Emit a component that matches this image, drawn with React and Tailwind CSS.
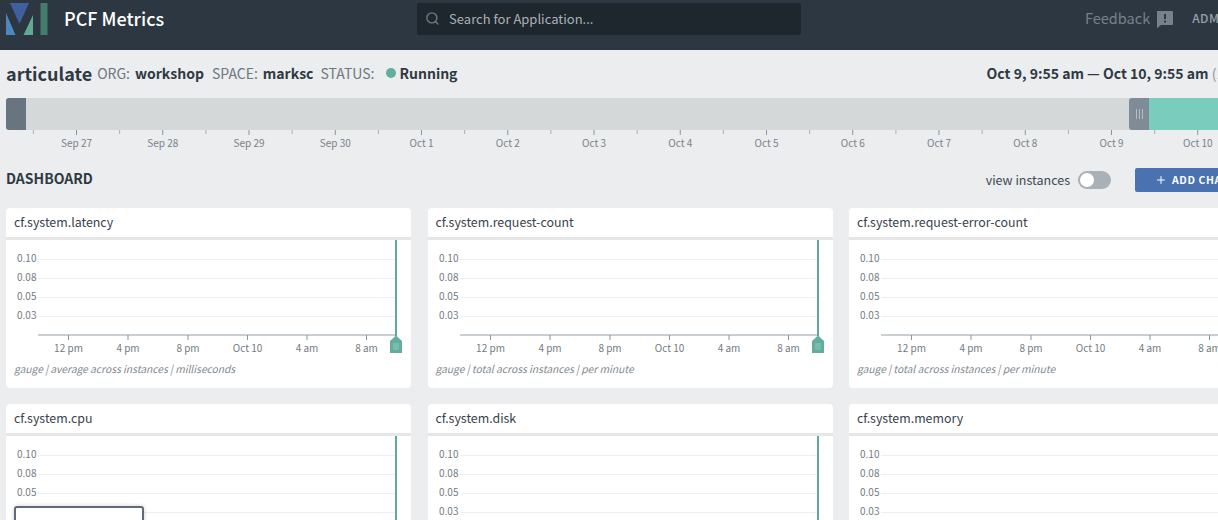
import React from 'react'
import { Search, Plus } from 'lucide-react'

const fontStack = "font-['Noto_Sans_CJK_SC','Noto_Sans',sans-serif]"

const timelineDays = ['Sep 27', 'Sep 28', 'Sep 29', 'Sep 30', 'Oct 1', 'Oct 2', 'Oct 3', 'Oct 4', 'Oct 5', 'Oct 6', 'Oct 7', 'Oct 8', 'Oct 9', 'Oct 10']

const charts = [
  { name: 'cf.system.latency', caption: 'gauge | average across instances | milliseconds', handle: true },
  { name: 'cf.system.request-count', caption: 'gauge | total across instances | per minute', handle: true },
  { name: 'cf.system.request-error-count', caption: 'gauge | total across instances | per minute', handle: false },
  { name: 'cf.system.cpu', caption: 'gauge | average across instances | percent', handle: true },
  { name: 'cf.system.disk', caption: 'gauge | average across instances | percent', handle: true },
  { name: 'cf.system.memory', caption: 'gauge | average across instances | percent', handle: false },
]

const yTicks = [['0.10', 19.5], ['0.08', 38.5], ['0.05', 57.5], ['0.03', 76.5]]
const xTicks = [['12 pm', 62.5], ['4 pm', 122], ['8 pm', 182], ['Oct 10', 241.5], ['4 am', 301], ['8 am', 360.5]]

function Logo() {
  return (
    <svg width="48" height="36" viewBox="0 0 48 36" className="mt-[-14px] shrink-0">
      <polygon points="10,3 29,3 19.5,24" fill="#3f5f9e" />
      <polygon points="6,13 15.5,35 6,35" fill="#4f86c1" />
      <polygon points="33,15 33,35 23.5,35" fill="#60a995" />
      <rect x="40.5" y="3" width="7" height="32" fill="#447d6b" />
    </svg>
  )
}

function Timeline() {
  return (
    <div className="mt-[2px]">
      <div className="flex h-[32px] w-[1254px] rounded-[3px] bg-[#d5d8d9] overflow-hidden">
        <div className="w-[20px] bg-[#68747f]" />
        <div className="flex-1" />
        <div className="w-[20px] rounded-l-[3px] bg-[#7f8c97] flex items-center justify-center gap-[2px]">
          <span className="w-px h-[10px] bg-[#b3bcc3]" />
          <span className="w-px h-[10px] bg-[#b3bcc3]" />
          <span className="w-px h-[10px] bg-[#b3bcc3]" />
        </div>
        <div className="w-[111px] bg-[#7accbc]" />
      </div>
      <svg width="1254" height="24" className="block">
        {timelineDays.map((day, i) => {
          const x = 70.5 + i * 86.25
          return (
            <g key={day}>
              <line x1={x} y1="0" x2={x} y2="5" stroke="#8b959e" />
              <line x1={x - 43.1} y1="0" x2={x - 43.1} y2="4" stroke="#a9b1b7" />
              <text x={x} y="17" textAnchor="middle" fontSize="10" fill="#7a8289">{day}</text>
            </g>
          )
        })}
      </svg>
    </div>
  )
}

function ChartCard({ name, caption, handle }) {
  return (
    <div className="h-[180px] rounded-[4px] bg-white overflow-hidden">
      <div className="h-[29px] px-[8px] flex items-center text-[12.4px] text-[#38424c]">{name}</div>
      <div className="h-[3px] bg-[#e6e6e6]" />
      <svg width="405" height="122" className="block">
        {yTicks.map(([label, y]) => (
          <g key={label}>
            <line x1="32" y1={y} x2="390" y2={y} stroke="#eeeff0" />
            <text x="11" y={y + 2.5} fontSize="10" fill="#737b82">{label}</text>
          </g>
        ))}
        <line x1="32" y1="95" x2="390" y2="95" stroke="#b9bfc4" strokeWidth="1.5" />
        {xTicks.map(([label, x]) => (
          <g key={label}>
            <line x1={x} y1="95" x2={x} y2="100" stroke="#8b959e" />
            <text x={x} y="112" textAnchor="middle" fontSize="10" fill="#737b82">{label}</text>
          </g>
        ))}
        {handle && (
          <g>
            <line x1="390" y1="0" x2="390" y2="96" stroke="#62a999" strokeWidth="2" />
            <polygon points="384,101 390,95.5 396,101 396,113 384,113" fill="#62ae9e" />
            <line x1="388" y1="103" x2="388" y2="110" stroke="#93c9bc" />
            <line x1="390" y1="103" x2="390" y2="110" stroke="#93c9bc" />
            <line x1="392" y1="103" x2="392" y2="110" stroke="#93c9bc" />
          </g>
        )}
      </svg>
      <div className="px-[8px] text-[10.25px] leading-[14px] italic text-[#7f8991]">{caption}</div>
    </div>
  )
}

export default function App() {
  return (
    <div className={`relative w-[1218px] h-[520px] overflow-hidden bg-[#ebedef] text-[#2f3943] ${fontStack}`}>
      <div className="w-[1260px]">
        <header className="h-[50px] bg-[#2d3741] flex items-center">
          <Logo />
          <span className="ml-[16px] mt-[-14px] text-[18px] font-medium text-white">PCF Metrics</span>
          <div className="ml-[253px] mt-[-13px] h-[32px] w-[384px] rounded-[2px] bg-[#1f272e] flex items-center px-[8px] text-[13px] text-[#a9b1b8]">
            <Search size={15} strokeWidth={2.2} className="text-[#6f7b85]" />
            <span className="ml-[9px]">Search for Application...</span>
          </div>
          <div className="ml-auto mt-[-15px] flex items-center pr-[27px] text-[#76818b]">
            <span className="text-[14.5px]">Feedback</span>
            <svg width="18" height="18" viewBox="0 0 18 18" className="ml-[5px] mt-[2px]">
              <path d="M2 1h15a1 1 0 0 1 1 1v12a1 1 0 0 1-1 1H6l-3 2.5-1 .5V2a1 1 0 0 1 0-1z" fill="#76818b" />
              <rect x="9" y="4" width="2" height="5" fill="#2d3741" />
              <rect x="9" y="10.5" width="2" height="2" fill="#2d3741" />
            </svg>
            <span className="ml-[19px] text-[12px] font-medium tracking-[0.5px] text-[#98a1a9]">ADMIN</span>
          </div>
        </header>

        <main className="px-[6px]">
          <div className="h-[46px] flex items-center">
            <span className="text-[18px] font-bold">articulate</span>
            <span className="ml-[5px] text-[14px] text-[#6d7780]">ORG:</span>
            <span className="ml-[5px] text-[14px] font-bold">workshop</span>
            <span className="ml-[8px] text-[14px] text-[#6d7780]">SPACE:</span>
            <span className="ml-[5px] text-[14px] font-bold">marksc</span>
            <span className="ml-[7px] text-[14px] text-[#6d7780]">STATUS:</span>
            <span className="ml-[12px] w-[10px] h-[10px] rounded-full bg-[#62ae9e]" />
            <span className="ml-[3px] text-[14px] font-bold">Running</span>
            <span className="ml-auto mr-[-2px] text-[14px] font-bold">Oct 9, 9:55 am — Oct 10, 9:55 am <span className="font-normal text-[#8b959e]">(1 day)</span></span>
          </div>

          <Timeline />

          <div className="mt-[14px] h-[24px] flex items-center">
            <h2 className="mt-[-3px] text-[14px] font-bold">DASHBOARD</h2>
            <span className="ml-auto text-[12.5px] text-[#3f4953]">view instances</span>
            <div className="ml-[8px] w-[33px] h-[18px] rounded-full bg-[#a9b1b8] p-[2px]">
              <div className="w-[14px] h-[14px] rounded-full bg-white" />
            </div>
            <button className="ml-[24px] h-[24px] w-[119px] rounded-[2px] bg-[#4a72b0] flex items-center pl-[20px] text-[10.5px] font-bold tracking-[0.6px] text-white">
              <Plus size={12} className="mr-[5px]" />
              ADD CHART
            </button>
          </div>

          <div className="mt-[16px] grid grid-cols-[405px_405px_405px] gap-x-[16.5px] gap-y-[16px]">
            {charts.map((chart) => (
              <ChartCard key={chart.name} {...chart} />
            ))}
          </div>
        </main>
      </div>
      <div className="absolute left-[14px] top-[506px] w-[130px] h-[40px] rounded-[3px] border-2 border-[#5f6b78] bg-white shadow-[0_0_4px_rgba(0,0,0,0.2)]" />
    </div>
  )
}
